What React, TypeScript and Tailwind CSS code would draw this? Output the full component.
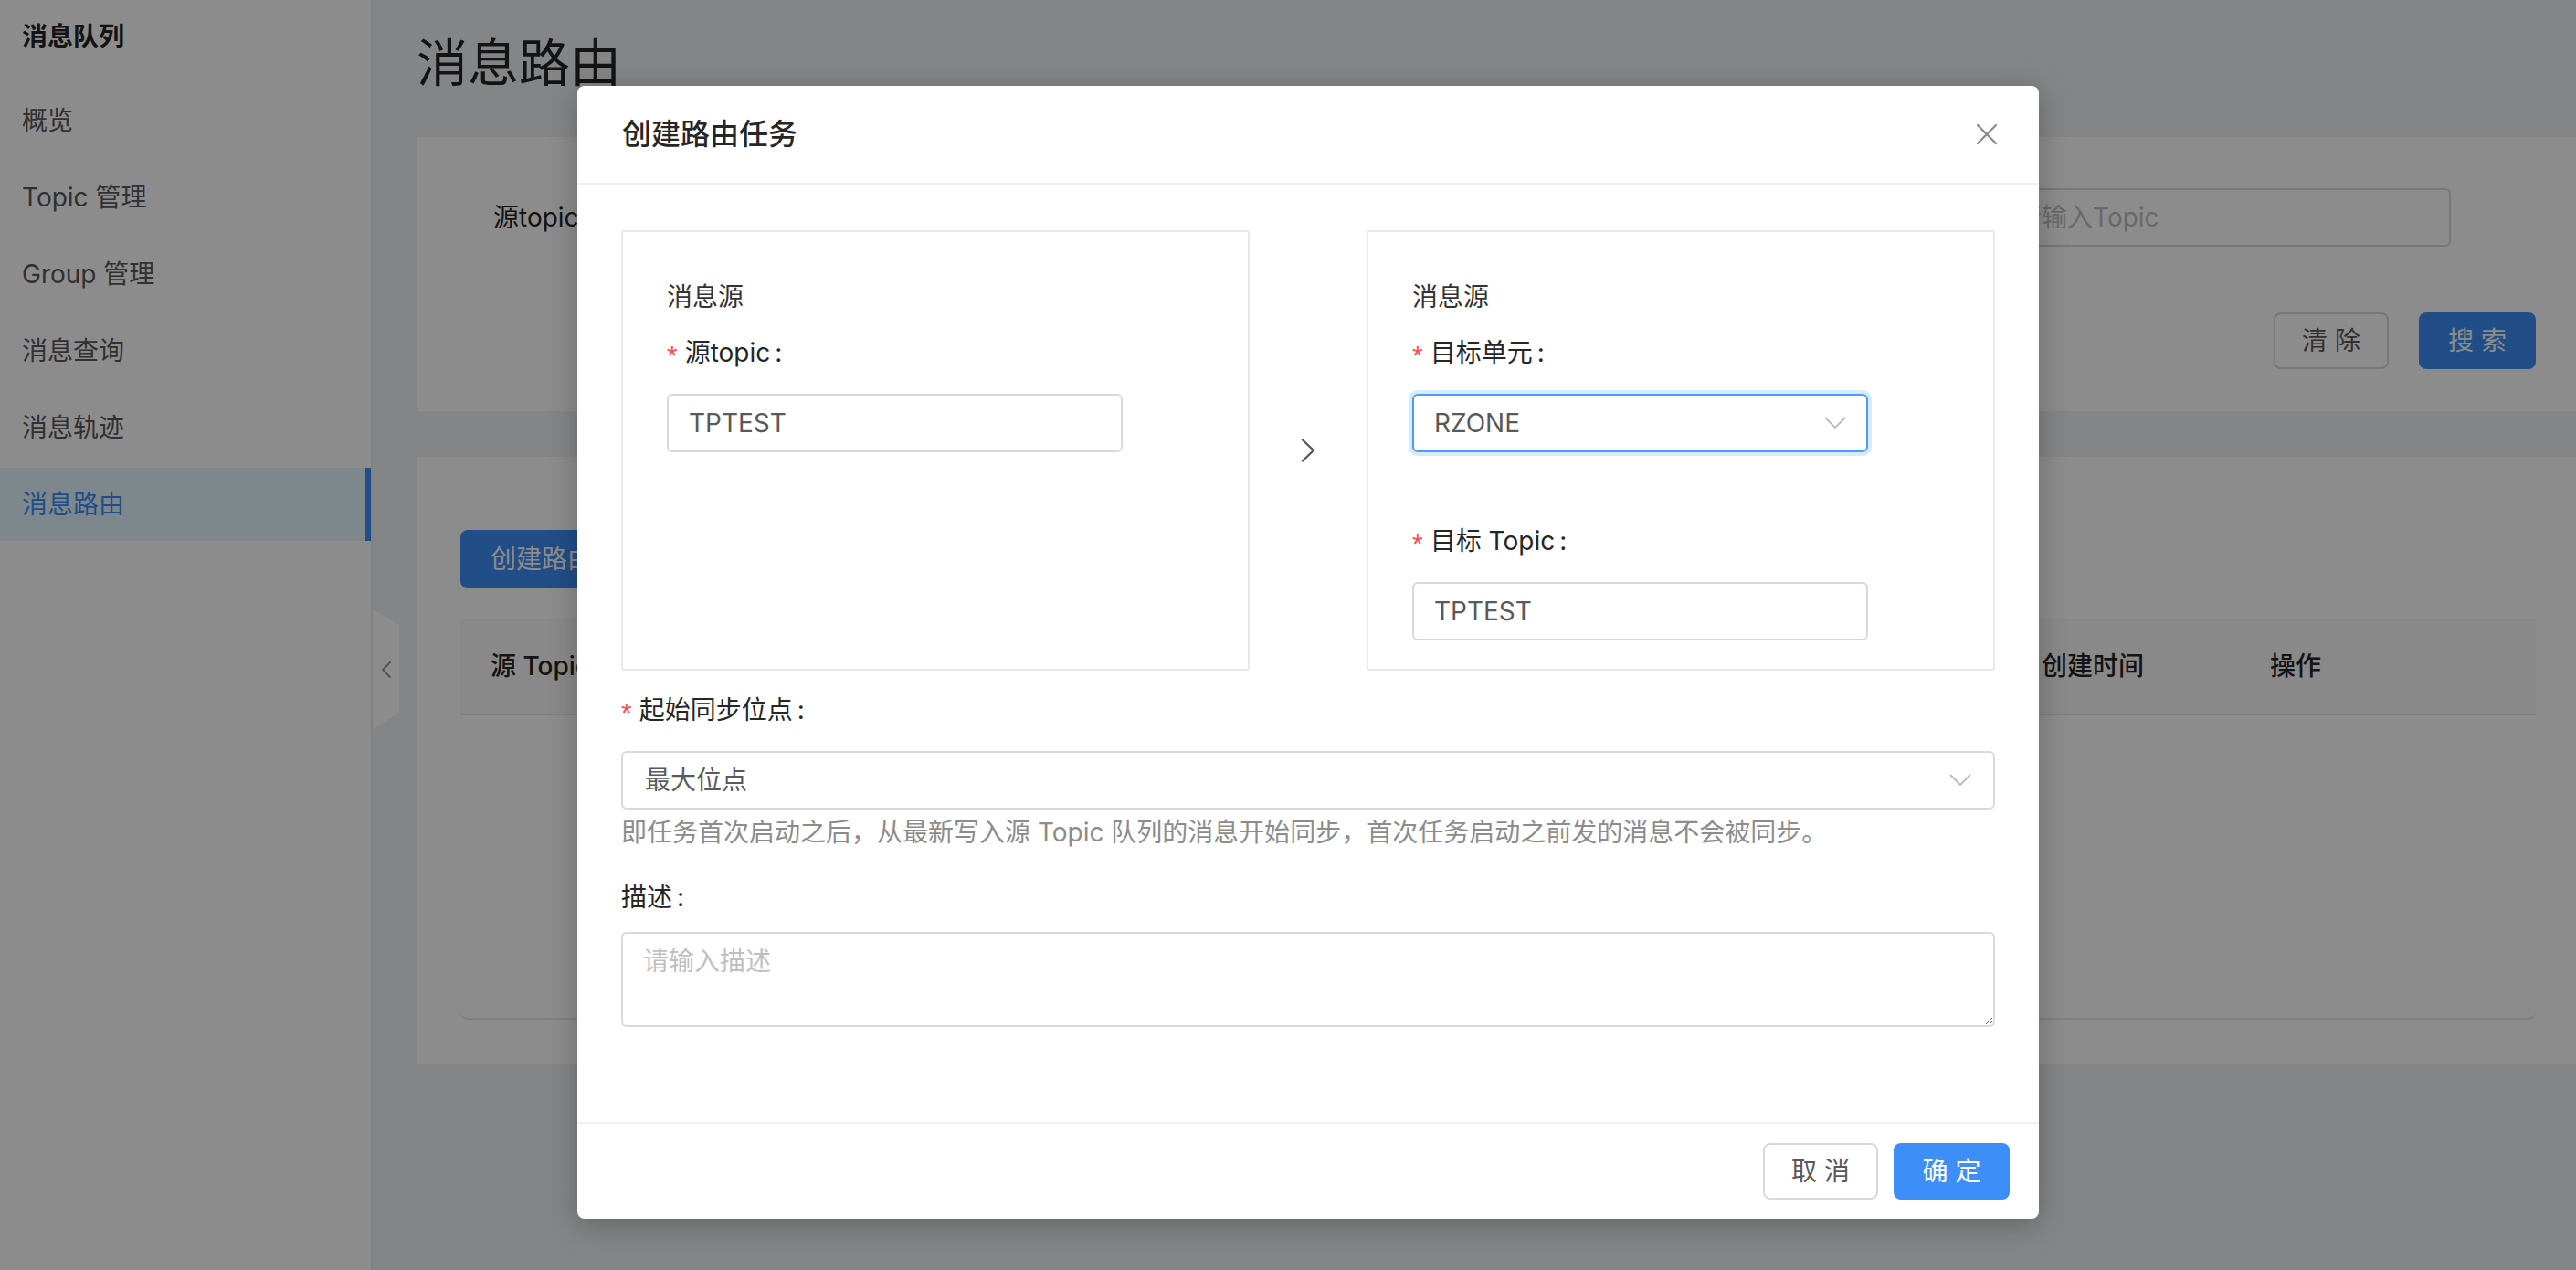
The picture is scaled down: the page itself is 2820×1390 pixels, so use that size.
import React from "react";

const items = ["概览", "Topic 管理", "Group 管理", "消息查询", "消息轨迹", "消息路由"];

function Req() {
  return (
    <span className="mr-[8px] text-[#ff4d4f] font-['Liberation_Sans',sans-serif] text-[30px] leading-none relative top-[3px]">
      *
    </span>
  );
}

function Label({ text, required }: { text: string; required?: boolean }) {
  return (
    <div className="flex items-center h-[44px] text-[28px] leading-[44px] text-[#262626]">
      {required && <Req />}
      <span>{text}</span>
      <span className="ml-[5px]">:</span>
    </div>
  );
}

function Chevron() {
  return (
    <svg width="24" height="14" viewBox="0 0 24 14" fill="none">
      <polyline points="1.5,1.5 12,12 22.5,1.5" stroke="#bfbfbf" strokeWidth="2" strokeLinejoin="round" strokeLinecap="round" />
    </svg>
  );
}

function TextBox({ value, className = "" }: { value: string; className?: string }) {
  return (
    <div
      className={
        "h-[64px] border-2 border-[#d9d9d9] rounded-[6px] px-[22px] flex items-center text-[28px] text-[#595959] bg-white " +
        className
      }
    >
      {value}
    </div>
  );
}

export default function App() {
  return (
    <div className="relative w-[2820px] h-[1390px] overflow-hidden flex bg-[#f0f2f5] font-['Inter','Noto_Sans_CJK_SC',sans-serif]">
      {/* Sidebar */}
      <aside className="w-[408px] h-full shrink-0 bg-white border-r-2 border-[#ebebeb]">
        <div className="h-[80px] pl-[24px] flex items-center text-[28px] font-bold text-[#262626]">消息队列</div>
        <ul className="mt-[12px] flex flex-col gap-[4px]">
          {items.map((t) =>
            t === "消息路由" ? (
              <li
                key={t}
                className="h-[80px] flex items-center pl-[24px] text-[28px] bg-[#e6f7ff] text-[#3e8ef7] border-r-[6px] border-[#3e8ef7]"
              >
                {t}
              </li>
            ) : (
              <li key={t} className="h-[80px] flex items-center pl-[24px] text-[28px] text-[#595959]">
                {t}
              </li>
            )
          )}
        </ul>
      </aside>

      {/* Main */}
      <main className="flex-1 min-w-0 pl-[48px] pt-[29px]">
        <h1 className="text-[56px] leading-[80px] text-[#262626] font-normal">消息路由</h1>

        <section className="mt-[41px] h-[300px] bg-white pl-[84px] pr-[44px] pt-[56px]">
          <div className="flex items-center h-[64px]">
            <span className="text-[28px] text-[#262626]">源topic</span>
            <span className="text-[28px] text-[#262626] ml-[6px]">:</span>
            <TextBox value="" className="w-[500px] ml-[16px]" />
            <div className="ml-auto flex items-center mr-[93px]">
              <span className="text-[28px] text-[#262626] mr-[16px]">目标Topic :</span>
              <div className="w-[500px] h-[64px] border-2 border-[#d9d9d9] rounded-[6px] px-[22px] flex items-center text-[28px] text-[#bfbfbf]">
                请输入Topic
              </div>
            </div>
          </div>
          <div className="mt-[72px] flex justify-end gap-[33px]">
            <button className="w-[126px] h-[62px] border-2 border-[#d9d9d9] rounded-[8px] text-[28px] text-[#595959] bg-white">
              清 除
            </button>
            <button className="w-[128px] h-[62px] rounded-[8px] text-[28px] text-white bg-[#3e8ef7]">搜 索</button>
          </div>
        </section>

        <section className="mt-[50px] h-[665px] bg-white pl-[48px] pr-[44px] pt-[80px]">
          <button className="h-[64px] px-[33px] rounded-[8px] text-[28px] text-white bg-[#3e8ef7]">创建路由任务</button>
          <div className="mt-[33px]">
            <div className="h-[106px] bg-[#fafafa] border-b-2 border-[#e8e8e8] grid grid-cols-[425px_425px_424px_424px_250px_1fr] items-center text-[28px] font-medium text-[#262626]">
              <div className="pl-[33px]">源 Topic</div>
              <div className="pl-[33px]">目标单元</div>
              <div className="pl-[33px]">目标 Topic</div>
              <div className="pl-[33px]">状态</div>
              <div className="pl-[33px]">创建时间</div>
              <div className="pl-[33px]">操作</div>
            </div>
            <div className="h-[333px] border-b-2 border-[#e8e8e8] rounded-b-[8px] flex items-center justify-center text-[28px] text-[#bfbfbf]">
              暂无数据
            </div>
          </div>
        </section>
      </main>

      {/* Sider collapse handle */}
      <div className="absolute left-[408px] top-[667px]">
        <svg width="30" height="131" viewBox="0 0 30 131">
          <polygon points="0,0 29,17 29,113 0,131" fill="#ffffff" />
          <polyline points="19,58 11,66 19,74" fill="none" stroke="#9a9a9a" strokeWidth="2" strokeLinecap="round" strokeLinejoin="round" />
        </svg>
      </div>

      {/* Mask */}
      <div className="absolute inset-0 bg-black/45" />

      {/* Modal */}
      <div className="absolute left-[632px] top-[94px] w-[1600px] h-[1240px] bg-white rounded-[8px] shadow-[0_6px_32px_rgba(0,0,0,0.25)] flex flex-col">
        <div className="h-[108px] shrink-0 pl-[49px] pr-[45px] flex items-center justify-between border-b-2 border-[#f0f0f0]">
          <div className="text-[32px] font-medium text-[#262626]">创建路由任务</div>
          <svg width="24" height="24" viewBox="0 0 24 24">
            <path d="M2 2 L22 22 M22 2 L2 22" stroke="#8c8c8c" strokeWidth="2.4" strokeLinecap="round" />
          </svg>
        </div>

        <div className="flex-1 px-[48px] pt-[50px]">
          <div className="flex items-center">
            <div className="w-[688px] h-[482px] border-2 border-[#e8e8e8] rounded-[3px] pl-[48px] pt-[49px]">
              <div className="h-[44px] leading-[44px] text-[28px] text-[#333]">消息源</div>
              <div className="mt-[17px]">
                <Label text="源topic" required />
              </div>
              <TextBox value="TPTEST" className="mt-[23px] w-[499px]" />
            </div>

            <div className="w-[128px] flex justify-center">
              <svg width="16" height="26" viewBox="0 0 16 26">
                <polyline points="2,1.5 14,13 2,24.5" fill="none" stroke="#595959" strokeWidth="2.4" strokeLinecap="round" strokeLinejoin="round" />
              </svg>
            </div>

            <div className="w-[688px] h-[482px] border-2 border-[#e8e8e8] rounded-[3px] pl-[48px] pt-[49px]">
              <div className="h-[44px] leading-[44px] text-[28px] text-[#333]">消息源</div>
              <div className="mt-[17px]">
                <Label text="目标单元" required />
              </div>
              <div className="mt-[23px] w-[499px] h-[64px] border-2 border-[#4d9bf6] rounded-[6px] shadow-[0_0_0_4px_rgba(24,144,255,0.18)] pl-[22px] pr-[22px] flex items-center justify-between text-[28px] text-[#595959]">
                <span>RZONE</span>
                <Chevron />
              </div>
              <div className="mt-[75px]">
                <Label text="目标 Topic" required />
              </div>
              <TextBox value="TPTEST" className="mt-[23px] w-[499px]" />
            </div>
          </div>

          <div className="mt-[21px]">
            <Label text="起始同步位点" required />
          </div>
          <div className="mt-[23px] h-[64px] border-2 border-[#d9d9d9] rounded-[6px] pl-[24px] pr-[24px] flex items-center justify-between text-[28px] text-[#595959]">
            <span>最大位点</span>
            <Chevron />
          </div>
          <div className="mt-[3px] h-[44px] leading-[44px] text-[28px] text-[#8c8c8c]">
            即任务首次启动之后，从最新写入源 Topic 队列的消息开始同步，首次任务启动之前发的消息不会被同步。
          </div>
          <div className="mt-[27px]">
            <Label text="描述" />
          </div>
          <textarea
            className="mt-[16px] block w-full h-[104px] border-2 border-[#d9d9d9] rounded-[6px] px-[22px] py-[8px] text-[28px] leading-[44px] text-[#595959] placeholder:text-[#bfbfbf] outline-none resize-y"
            placeholder="请输入描述"
          />
        </div>

        <div className="h-[106px] shrink-0 border-t-2 border-[#f0f0f0] pr-[32px] flex items-center justify-end gap-[17px]">
          <button className="w-[126px] h-[62px] border-2 border-[#d9d9d9] rounded-[8px] text-[28px] text-[#595959] bg-white">
            取 消
          </button>
          <button className="w-[127px] h-[62px] rounded-[8px] text-[28px] text-white bg-[#3e8ef7]">确 定</button>
        </div>
      </div>
    </div>
  );
}
